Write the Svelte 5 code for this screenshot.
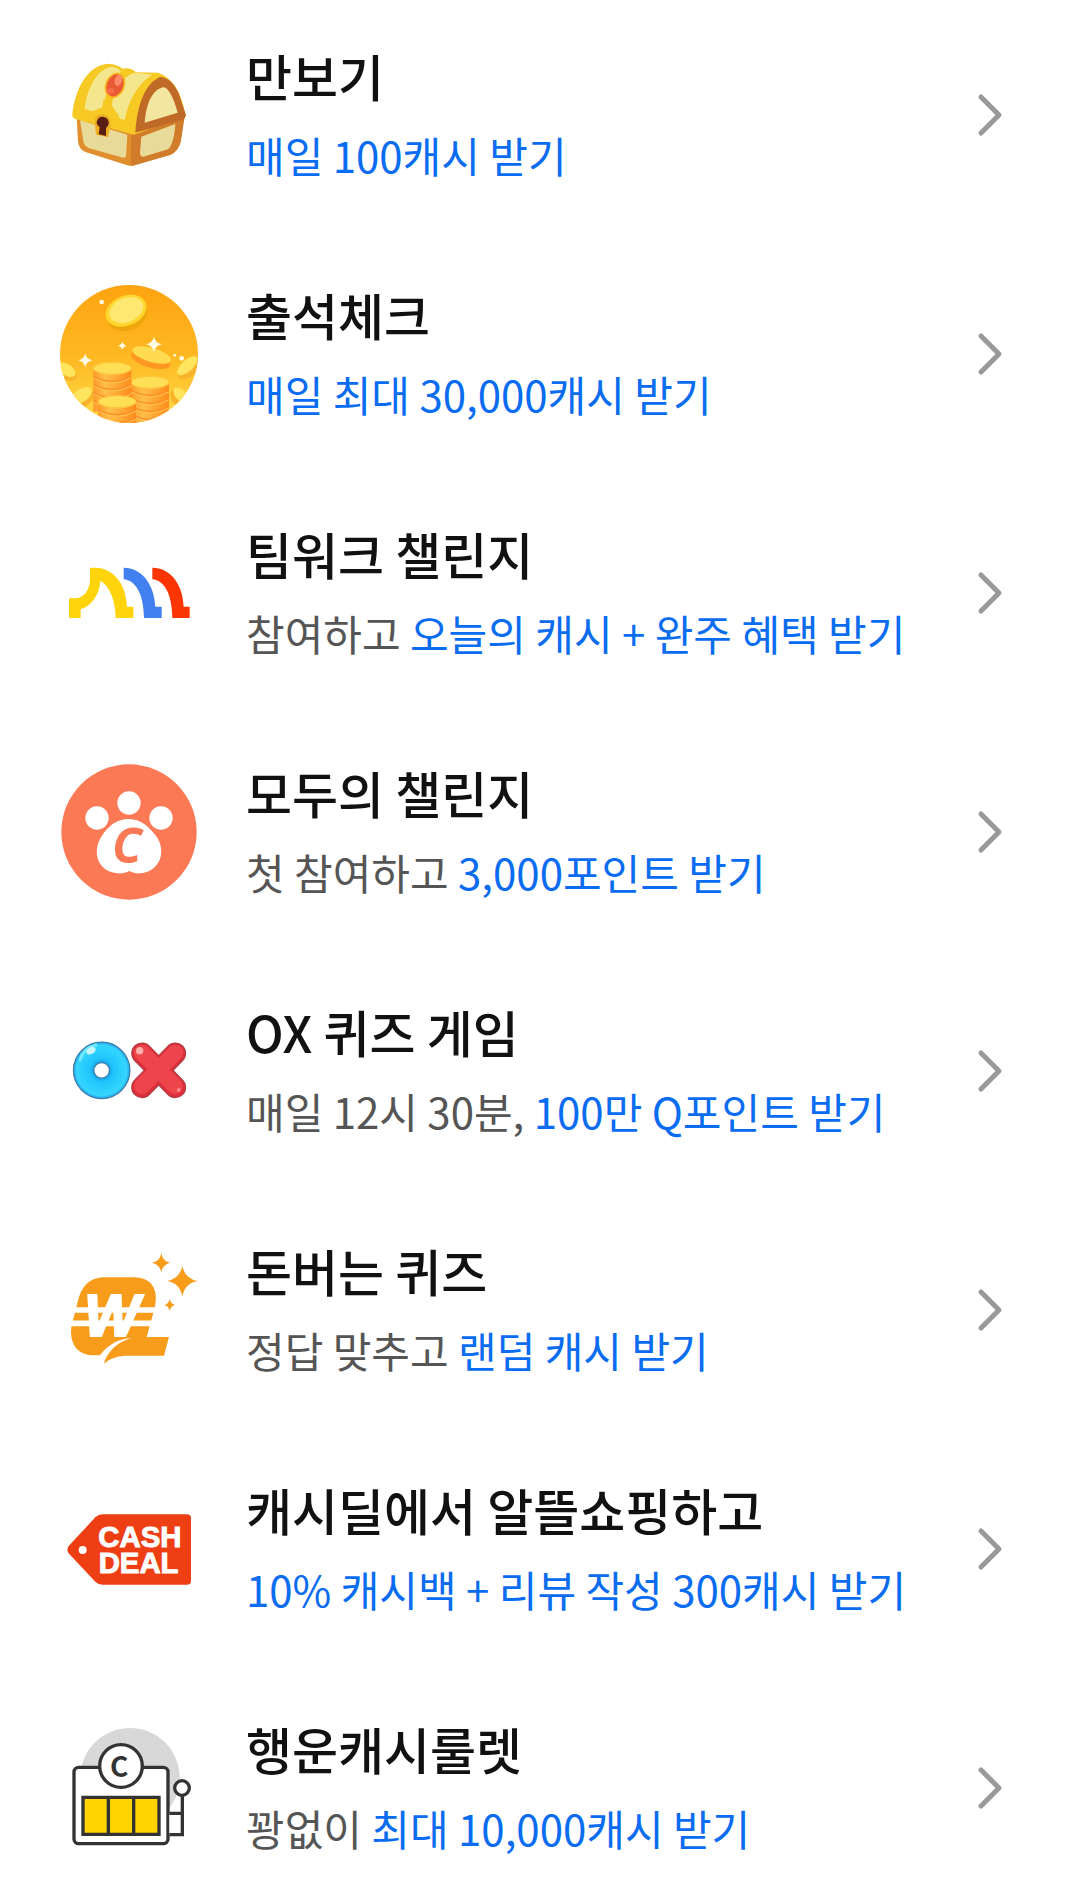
<script>
  const items = [
    { icon: 'chest', box: '27 15 420 420', title: '만보기', accent: '매일 100캐시 받기' },
    { icon: 'coins', box: '27 27 420 420', title: '출석체크', accent: '매일 최대 30,000캐시 받기' },
    { icon: 'team', box: '27 -51 420 420', title: '팀워크 챌린지', lead: '참여하고', accent: '오늘의 캐시 + 완주 혜택 받기' },
    { icon: 'paw', box: '27 21 420 420', title: '모두의 챌린지', lead: '첫 참여하고', accent: '3,000포인트 받기' },
    { icon: 'ox', box: '27 -57 420 420', title: 'OX 퀴즈 게임', lead: '매일 12시 30분,', accent: '100만 Q포인트 받기' },
    { icon: 'won', box: '27 0 420 420', title: '돈버는 퀴즈', lead: '정답 맞추고', accent: '랜덤 캐시 받기' },
    { icon: 'deal', box: '27 -33 420 420', title: '캐시딜에서 알뜰쇼핑하고', accent: '10% 캐시백 + 리뷰 작성 300캐시 받기' },
    { icon: 'slot', box: '27 24 420 420', title: '행운캐시룰렛', lead: '꽝없이', accent: '최대 10,000캐시 받기' }
  ];
  const stacks = [
    { x: 243, y: 322, n: 5 },
    { x: 130, y: 280, n: 5 },
    { x: 144, y: 380, n: 3 }
  ];
</script>

<ul class="list">
  {#each items as item}
    <li>
      <a class="row" href="#{item.icon}">
        <svg class="icon" viewBox={item.box} aria-hidden="true">
          {#if item.icon === 'chest'}
            <path fill="#e08f2e" d="M80 228 L84 305 Q87 328 106 336 L232 376 Q244 380 258 374 L362 344 Q384 334 392 306 L402 228 L250 210Z" />
            <path fill="#d07c2b" d="M244 280 L404 232 L392 306 Q384 334 362 344 L258 374 Q250 377 242 376Z" />
            <path fill="#e8da98" d="M90 240 L232 284 L228 350 Q224 354 214 352 L116 324 Q102 318 100 304Z M274 290 L376 252 Q372 312 354 328 L280 350 Q270 350 270 338Z" />
            <path fill="#f6c925" d="M67 224 C74 150 112 74 175 71 Q200 72 218 86 Q240 80 258 97 L325 98 Q378 118 398 190 L408 228 L252 284 L74 236 Q66 232 67 224Z" />
            <path fill="#f3e68c" d="M104 206 C112 140 142 94 176 82 Q200 78 213 95 Q174 128 158 202 Q132 214 124 213Z M184 206 C190 156 210 112 254 98 L307 104 C262 132 236 180 224 240 L196 232Z" />
            <path fill="#f6c925" d="M160 180 L182 182 Q184 200 206 226 L212 252 L126 230 Q138 212 156 207Z" />
            <path fill="#c06a28" d="M256 278 C260 200 284 130 330 111 Q364 112 386 160 L408 226 L402 238Z" />
            <path fill="#f3e6a0" d="M284 248 C288 188 310 144 343 142 Q364 150 383 218Z" />
            <ellipse cx="195" cy="136" rx="27" ry="37" transform="rotate(22 195 136)" fill="#ea5a34" stroke="#f7b91d" stroke-width="5" />
            <ellipse cx="205" cy="121" rx="11" ry="17" transform="rotate(18 205 121)" fill="#ff8a66" />
            <ellipse cx="181" cy="152" rx="12" ry="9" fill="#f66c48" />
            <path fill="#eeae22" d="M134 244 Q136 222 158 222 Q184 226 182 254 L174 292 L138 284 Z" />
            <path fill="#5a1d14" d="M140 246 Q144 229 160 230 Q178 235 176 251 Q174 260 168 264 L168 288 L146 283 L149 261 Q140 256 140 246Z" />
          {:else if item.icon === 'coins'}
            <defs>
              <linearGradient id="sky" x1="0" y1="0" x2="0" y2="1">
                <stop offset="0" stop-color="#fda310" />
                <stop offset="0.5" stop-color="#feb721" />
                <stop offset="1" stop-color="#ffdc4a" />
              </linearGradient>
              <linearGradient id="edge" x1="0" y1="0" x2="1" y2="0">
                <stop offset="0" stop-color="#ff9a28" />
                <stop offset="0.3" stop-color="#ffbe4a" />
                <stop offset="1" stop-color="#ff8c1c" />
              </linearGradient>
              <clipPath id="disc"><circle cx="237" cy="237" r="207" /></clipPath>
            </defs>
            <g clip-path="url(#disc)">
              <rect x="27" y="27" width="420" height="420" fill="url(#sky)" />
              <g fill="#f9b32a">
                <ellipse cx="50" cy="292" rx="34" ry="21" transform="rotate(32 50 292)" />
                <ellipse cx="98" cy="370" rx="38" ry="25" transform="rotate(-35 98 370)" />
                <ellipse cx="418" cy="280" rx="42" ry="23" transform="rotate(-42 418 280)" />
                <ellipse cx="388" cy="370" rx="32" ry="22" transform="rotate(45 388 370)" />
              </g>
              <g fill="#ffe55e">
                <ellipse cx="48" cy="284" rx="32" ry="17" transform="rotate(32 48 284)" />
                <ellipse cx="94" cy="362" rx="36" ry="19" transform="rotate(-35 94 362)" />
                <ellipse cx="412" cy="272" rx="38" ry="17" transform="rotate(-42 412 272)" />
                <ellipse cx="394" cy="362" rx="30" ry="16" transform="rotate(45 394 362)" />
              </g>
              <ellipse cx="232" cy="120" rx="62" ry="46" transform="rotate(-22 232 120)" fill="#eda60b" />
              <ellipse cx="228" cy="107" rx="64" ry="45" transform="rotate(-22 228 107)" fill="#ffd52e" />
              <ellipse cx="229" cy="105" rx="53" ry="36" transform="rotate(-22 229 105)" fill="#ffe872" />
              <ellipse cx="302" cy="254" rx="61" ry="24" transform="rotate(16 302 254)" fill="#ff9822" />
              <ellipse cx="305" cy="240" rx="60" ry="21" transform="rotate(16 305 240)" fill="#ffdb50" />
              {#each stacks as s}
                <path d="M{s.x} {s.y}h114v130h-114z" fill="url(#edge)" />
                {#each Array(s.n) as _, i}
                  <path d="M{s.x} {s.y + 24 * i}q57 30 114 0" fill="none" stroke="#fb8f2a" stroke-width="4" />
                  <path d="M{s.x} {s.y + 5 + 24 * i}q57 30 114 0" fill="none" stroke="#ffc552" stroke-width="3" />
                {/each}
                <ellipse cx={s.x + 57} cy={s.y} rx="57" ry="18" fill="#ffdf56" stroke="#ffc43a" stroke-width="3" />
              {/each}
              <g fill="#fffbe5">
                <path d="M312 184q2 20 24 24q-22 4-24 24q-3-20-24-24q21-4 24-24z" />
                <path d="M106 234q2 18 21 22q-19 4-21 22q-3-18-21-22q18-4 21-22z" />
                <path d="M217 200q2 9 12 12q-10 3-12 12q-2-9-12-12q10-3 12-12z" />
                <circle cx="155" cy="81" r="7" />
                <circle cx="395" cy="250" r="7" />
                <circle cx="374" cy="241" r="4" />
              </g>
            </g>
          {:else if item.icon === 'team'}
            <path fill="#ffd40a" d="M57 234V175H74C102 174 120 150 120 116V83H136C190 84 228 130 231 200H250V234H197C196 180 180 140 151 122C149 160 128 196 92 208V234Z" />
            <path fill="#4280f0" d="M221 83C270 82 312 126 316 200H335V234H282C281 160 256 121 221 118Z" />
            <path fill="#fb3504" d="M307 83C356 82 398 126 401 200H419V234H367C366 160 342 121 307 118Z" />
          {:else if item.icon === 'paw'}
            <circle cx="237" cy="231" r="203" fill="#fc7955" />
            <g fill="#fff">
              <circle cx="141" cy="189" r="35" />
              <circle cx="237" cy="144" r="35" />
              <circle cx="333" cy="189" r="35" />
              <path d="M237 192C274 192 300 219 320 245C348 286 333 345 278 354C262 357 250 354 238 348C226 354 212 357 196 354C142 345 126 290 154 245C174 213 200 192 237 192Z" />
            </g>
            <text class="paw-letter" x="186" y="325">C</text>
          {:else if item.icon === 'ox'}
            <defs>
              <radialGradient id="ring" cx="155" cy="151" r="86" gradientUnits="userSpaceOnUse">
                <stop offset="0.26" stop-color="#1f9ce6" />
                <stop offset="0.42" stop-color="#1fc6fb" />
                <stop offset="0.88" stop-color="#35d5ff" />
                <stop offset="1" stop-color="#1f92e0" />
              </radialGradient>
            </defs>
            <circle cx="155" cy="151" r="54" fill="none" stroke="#3f789c" stroke-width="65" />
            <circle cx="155" cy="151" r="54" fill="none" stroke="url(#ring)" stroke-width="59" />
            <path d="M90 120Q100 84 138 75" fill="none" stroke="#6fe7ff" stroke-width="9" stroke-linecap="round" />
            <ellipse cx="123" cy="92" rx="15" ry="10" transform="rotate(-30 123 92)" fill="#c9f6ff" />
            <g fill="none" stroke-linecap="round">
              <path d="M276 100L376 202M376 100L276 202" stroke="#a8404a" stroke-width="65" />
              <path d="M276 100L376 202M376 100L276 202" stroke="#d9303b" stroke-width="60" />
              <path d="M276 98L374 198M376 98L276 198" stroke="#ee454d" stroke-width="48" />
            </g>
            <circle cx="269" cy="92" r="11" fill="#ffb0a8" />
            <circle cx="386" cy="210" r="6" fill="#ff8585" />
          {:else if item.icon === 'won'}
            <g fill="#f89c1c">
              <path d="M164 112H250C304 112 326 146 315 200L290 291H357L342 347H233C204 347 182 354 162 371C166 352 180 330 202 314Q221 300 246 295C210 296 178 310 150 346H132C80 346 54 306 66 252L82 190C94 138 118 112 164 112Z" />
              <path d="M334 40Q338 64 360 68Q338 73 334 98Q330 73 306 68Q330 64 334 40Z" />
              <path d="M397 77Q404 116 443 123Q404 130 397 169Q390 130 351 123Q390 116 397 77Z" />
              <path d="M359 177Q362 192 376 195Q362 198 359 213Q356 198 343 195Q356 192 359 177Z" />
            </g>
            <path d="M60 210H330M60 250H320" stroke="#fff" stroke-width="17" />
            <text class="won-letter" x="102" y="288">W</text>
          {:else if item.icon === 'deal'}
            <path fill="#ee3e14" d="M158 73H411Q423 73 423 85V272Q423 284 411 284H158Q145 284 136 275L58 192Q46 179 58 166L136 82Q145 73 158 73Z" />
            <circle cx="98" cy="180" r="12" fill="#fff" />
            <text class="deal-text" x="145" y="171">CASH</text>
            <text class="deal-text" x="146" y="248">DEAL</text>
          {:else}
            <circle cx="240" cy="203" r="149" fill="#d8d8d8" />
            <g stroke="#333" stroke-width="10">
              <rect x="72" y="172" width="282" height="229" rx="14" fill="#fff" />
              <path d="M358 310H397V374H358" fill="#fff" />
              <path d="M397 310V258" fill="none" />
              <circle cx="396" cy="234" r="22" fill="#fff" />
              <circle cx="213" cy="168" r="64" fill="#fff" />
              <path d="M99 262H327V373H99ZM175 262V373M251 262V373" fill="#ffd400" />
            </g>
            <text class="slot-letter" x="180" y="202">C</text>
          {/if}
        </svg>
        <span class="body">
          <strong class="title">{item.title}</strong>
          <span class="sub">{item.lead ? item.lead + ' ' : ''}<em>{item.accent}</em></span>
        </span>
        <svg class="chevron" viewBox="0 0 28 48" aria-hidden="true">
          <path d="M4 6L22 24L4 42" />
        </svg>
      </a>
    </li>
  {/each}
</ul>

<style>
  :global(body) {
    margin: 0;
    background: #fff;
  }
  .list {
    display: flex;
    flex-direction: column;
    gap: 99px;
    margin: 0;
    padding: 45px 75px 32px 59px;
    list-style: none;
    font-family: 'Noto Sans CJK KR', 'Noto Sans', sans-serif;
  }
  .row {
    display: flex;
    align-items: center;
    height: 140px;
    color: #111;
    text-decoration: none;
  }
  .icon {
    flex: none;
    width: 140px;
    height: 140px;
    margin-right: 47px;
  }
  .body {
    flex: 1;
    display: flex;
    flex-direction: column;
    gap: 16px;
    min-width: 0;
    padding-bottom: 4px;
  }
  .title {
    font-size: 50px;
    font-weight: 500;
    line-height: 68px;
  }
  .sub {
    color: #555;
    font-size: 42px;
    line-height: 60px;
    white-space: nowrap;
  }
  .sub em {
    color: #0a6cf0;
    font-style: normal;
  }
  .chevron {
    flex: none;
    width: 28px;
    height: 48px;
    fill: none;
    stroke: #999;
    stroke-width: 5;
    stroke-linecap: round;
    stroke-linejoin: round;
  }
  .paw-letter {
    font: italic bold 146px 'Open Sans', sans-serif;
    fill: #fc7955;
  }
  .won-letter {
    font: italic bold 176px 'Liberation Sans', sans-serif;
    fill: #fff;
    stroke: #fff;
    stroke-width: 6px;
  }
  .deal-text {
    font: bold 88px 'Liberation Sans', sans-serif;
    fill: #fff;
    stroke: #fff;
    stroke-width: 3px;
  }
  .slot-letter {
    font: bold 84px 'Noto Sans CJK KR', sans-serif;
    fill: #333;
  }
</style>
